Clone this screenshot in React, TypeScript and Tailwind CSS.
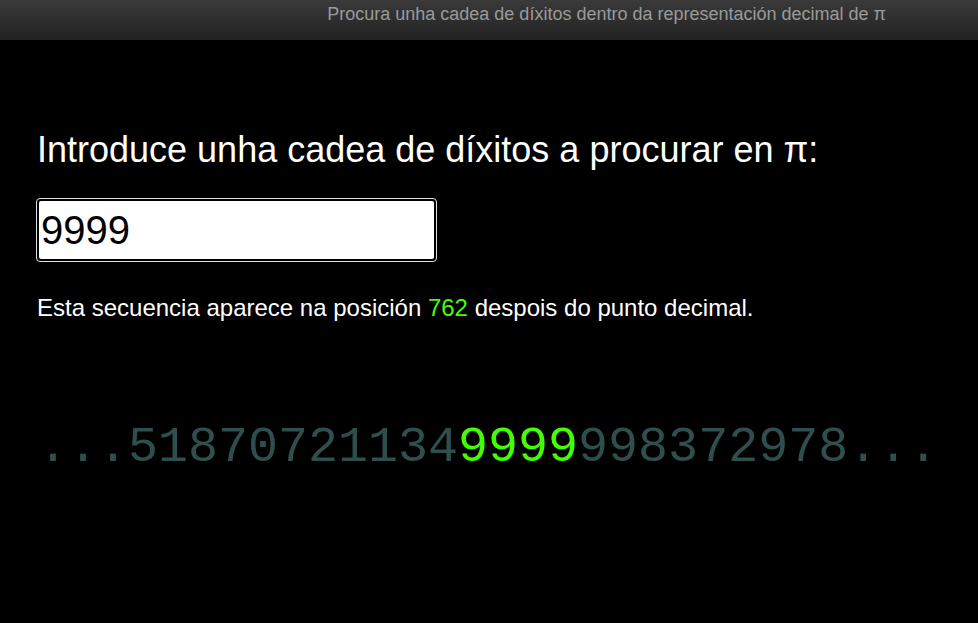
import { useState } from "react";

const before = "...51870721134";
const match = "9999";
const after = "998372978...";

export default function App() {
  const [value, setValue] = useState("9999");

  return (
    <div className="min-h-[623px] bg-black font-['Liberation_Sans',Arial,sans-serif] text-white">
      <header className="h-10 bg-gradient-to-b from-[#3a3a3a] to-[#222] flex items-center justify-end pr-[92px]">
        <span className="text-[18px] text-[#9a9a9a] -mt-[12px]">
          Procura unha cadea de díxitos dentro da representación decimal de π
        </span>
      </header>

      <main className="pl-[37px] pt-[90px]">
        <h1 className="text-[36px] leading-[40px] text-white">Introduce unha cadea de díxitos a procurar en π:</h1>

        <div className="-ml-px mt-[28px] w-[401px] h-[64px] rounded-[4px] border border-[#e0e0e0] bg-black p-[2px]">
          <input
            autoFocus
            value={value}
            onChange={(e) => setValue(e.target.value)}
            className="w-full h-full rounded-[2px] bg-white text-black text-[40px] pl-[2px] outline-none caret-black font-['Liberation_Sans',Arial,sans-serif]"
          />
        </div>

        <p className="mt-[32px] text-[24px] leading-[28px]">
          Esta secuencia aparece na posición <span className="text-[#44ff00]">762</span> despois do punto decimal.
        </p>

        <div className="mt-[98px] ml-[1px] font-['Liberation_Mono','Courier_New',monospace] text-[50px] leading-[56px] text-[#2f4f4f] whitespace-pre">
          {before}
          <span className="text-[#44ff00]">{match}</span>
          {after}
        </div>
      </main>
    </div>
  );
}
